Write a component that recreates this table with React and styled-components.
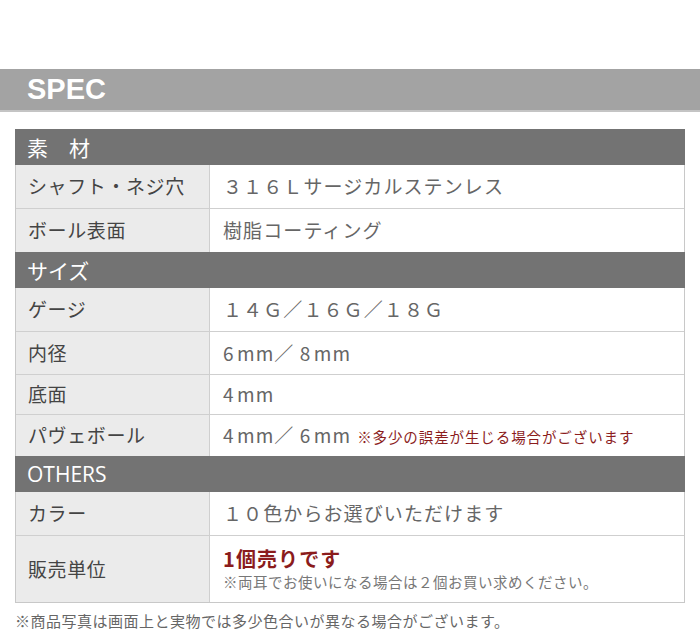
import React from 'react'
import styled, { createGlobalStyle } from 'styled-components'

const GlobalStyle = createGlobalStyle`
  body {
    margin: 0;
    background: #fff;
    font-family: 'Noto Sans CJK JP', 'Noto Sans', sans-serif;
  }
`

const Page = styled.div`
  width: 700px;
  padding-top: 69px;
`

const SpecBar = styled.div`
  height: 43px;
  background: #a3a3a3;
  display: flex;
  align-items: center;
  padding-left: 27px;
  font-family: 'Liberation Sans', Arial, sans-serif;
  font-weight: bold;
  font-size: 29px;
  color: #fff;
  border-bottom: 2px solid #c4c4c4;
  box-sizing: border-box;
`

const Table = styled.div`
  margin: 17px 15px 0;
  border: 1px solid #c8c8c8;
  border-top: none;
`

const Section = styled.div`
  height: 36px;
  box-sizing: border-box;
  background: #737373;
  color: #fff;
  display: flex;
  align-items: center;
  padding-left: 12px;
  line-height: 1;
  font-size: 21px;
  font-family: ${p => (p.latin ? "'Open Sans', sans-serif" : "'Noto Sans CJK JP', sans-serif")};
  margin: 0 -1px;
`

const Row = styled.div`
  display: grid;
  grid-template-columns: 194px 1fr;
  height: ${p => p.tall || 43}px;
  box-sizing: border-box;
  line-height: 1.2;
  & + & {
    border-top: 1px solid #cfcfcf;
  }
`

const Label = styled.div`
  background: #ebebeb;
  border-right: 1px solid #cfcfcf;
  display: flex;
  align-items: center;
  padding-left: 12px;
  font-size: 19px;
  letter-spacing: 0.6px;
  color: #444;
`

const Value = styled.div`
  display: flex;
  flex-direction: ${p => (p.stack ? 'column' : 'row')};
  justify-content: ${p => (p.stack ? 'center' : 'flex-start')};
  align-items: ${p => (p.stack ? 'flex-start' : 'center')};
  gap: ${p => (p.stack ? '3px' : '0')};
  padding-left: 13px;
  font-size: 19px;
  letter-spacing: 1.1px;
  color: #666;
`

const Note = styled.span`
  font-size: 14.5px;
  letter-spacing: 0.9px;
  color: #8b1c1c;
  margin-left: 6px;
  padding-top: 2px;
`

const Strong = styled.div`
  font-size: 20px;
  font-weight: bold;
  color: #8b1c1c;
  line-height: 22px;
`

const SubNote = styled.div`
  font-size: 14.5px;
  letter-spacing: 0.5px;
  color: #777;
  line-height: 18px;
`

const Footnote = styled.p`
  margin: 8px 0 0 15px;
  font-size: 15px;
  line-height: 20px;
  letter-spacing: 0.5px;
  color: #666;
`

export default function App() {
  return (
    <Page>
      <GlobalStyle />
      <SpecBar>SPEC</SpecBar>
      <Table>
        <Section>素　材</Section>
        <Row>
          <Label>シャフト・ネジ穴</Label>
          <Value>３１６Ｌサージカルステンレス</Value>
        </Row>
        <Row tall={44}>
          <Label>ボール表面</Label>
          <Value>樹脂コーティング</Value>
        </Row>
        <Section>サイズ</Section>
        <Row>
          <Label>ゲージ</Label>
          <Value>１４Ｇ／１６Ｇ／１８Ｇ</Value>
        </Row>
        <Row>
          <Label>内径</Label>
          <Value>6{'\u200A'}mm／ 8{'\u200A'}mm</Value>
        </Row>
        <Row tall={40}>
          <Label>底面</Label>
          <Value>4{'\u200A'}mm</Value>
        </Row>
        <Row tall={42}>
          <Label>パヴェボール</Label>
          <Value>
            4{'\u200A'}mm／ 6{'\u200A'}mm<Note>※多少の誤差が生じる場合がございます</Note>
          </Value>
        </Row>
        <Section latin>OTHERS</Section>
        <Row>
          <Label>カラー</Label>
          <Value>１０色からお選びいただけます</Value>
        </Row>
        <Row tall={67}>
          <Label>販売単位</Label>
          <Value stack>
            <Strong>1個売りです</Strong>
            <SubNote>※両耳でお使いになる場合は２個お買い求めください。</SubNote>
          </Value>
        </Row>
      </Table>
      <Footnote>※商品写真は画面上と実物では多少色合いが異なる場合がございます。</Footnote>
    </Page>
  )
}
